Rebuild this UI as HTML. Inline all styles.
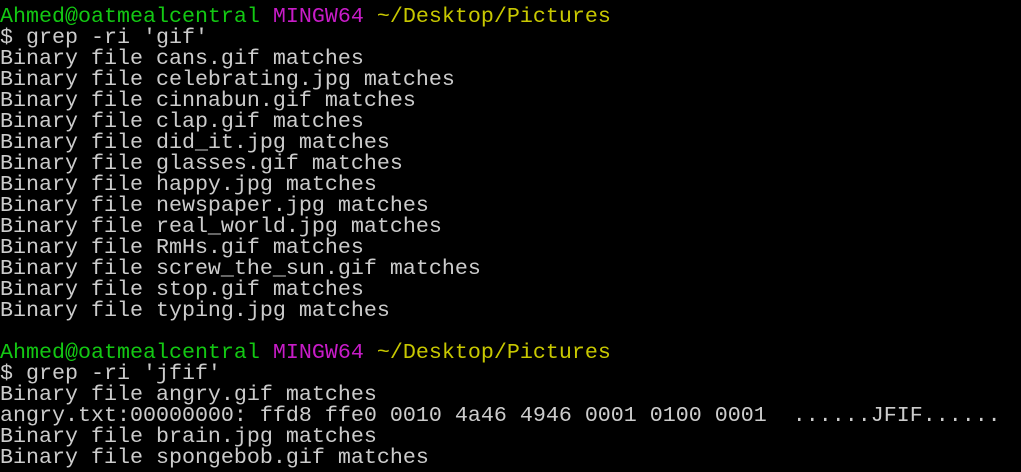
<!DOCTYPE html><html><head><style>
html,body{margin:0;background:#000;width:1021px;height:472px;overflow:hidden}
pre{margin:0;padding:6px 0 0 0;font-family:"Liberation Mono",monospace;font-size:21.67px;line-height:21px;color:#cccccc}
.g{color:#13c813}.m{color:#c81cc8}.y{color:#c8c800}
</style></head><body><pre><span class="g">Ahmed@oatmealcentral</span> <span class="m">MINGW64</span> <span class="y">~/Desktop/Pictures</span>
$ grep -ri 'gif'
Binary file cans.gif matches
Binary file celebrating.jpg matches
Binary file cinnabun.gif matches
Binary file clap.gif matches
Binary file did_it.jpg matches
Binary file glasses.gif matches
Binary file happy.jpg matches
Binary file newspaper.jpg matches
Binary file real_world.jpg matches
Binary file RmHs.gif matches
Binary file screw_the_sun.gif matches
Binary file stop.gif matches
Binary file typing.jpg matches

<span class="g">Ahmed@oatmealcentral</span> <span class="m">MINGW64</span> <span class="y">~/Desktop/Pictures</span>
$ grep -ri 'jfif'
Binary file angry.gif matches
angry.txt:00000000: ffd8 ffe0 0010 4a46 4946 0001 0100 0001  ......JFIF......
Binary file brain.jpg matches
Binary file spongebob.gif matches</pre></body></html>
